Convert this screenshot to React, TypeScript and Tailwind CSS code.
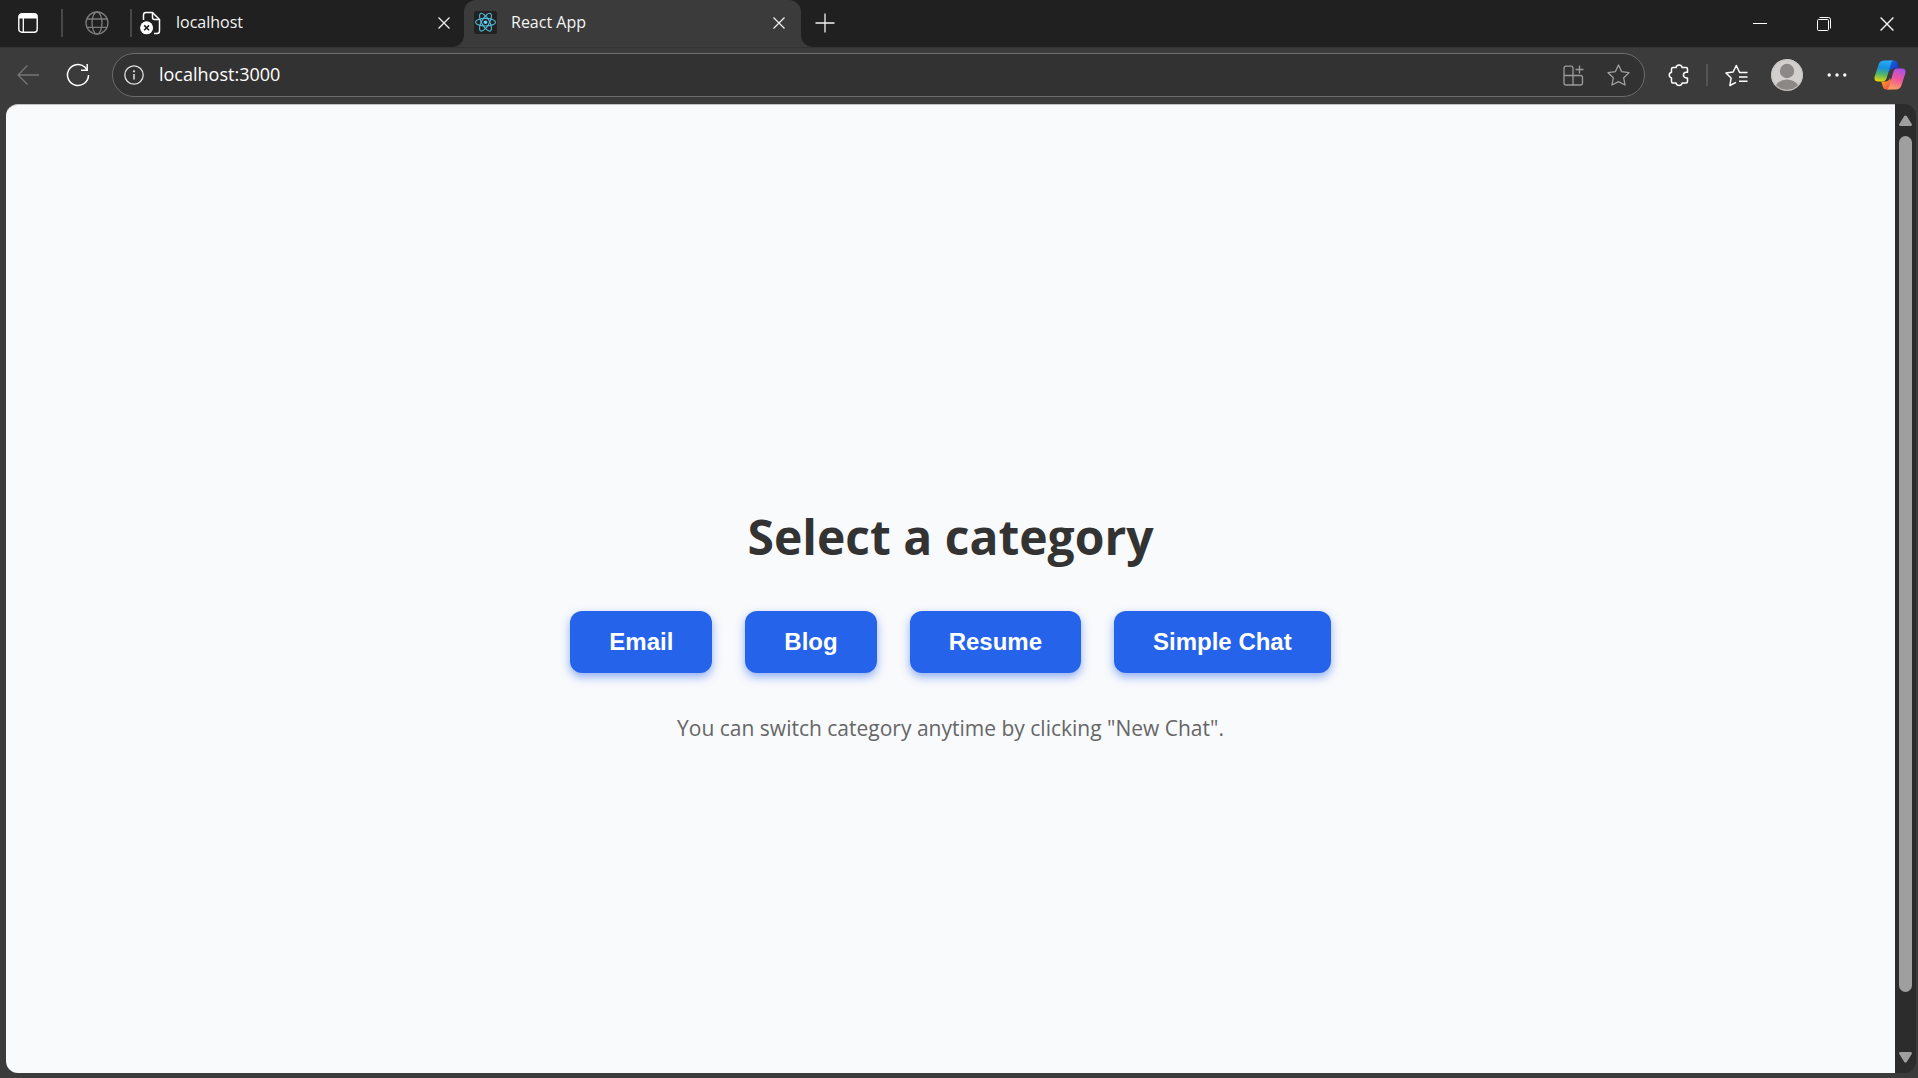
import React from "react";

const categories = ["Email", "Blog", "Resume", "Simple Chat"];

function TabActionsIcon() {
  return (
    <svg width="20" height="20" viewBox="0 0 20 20" fill="none" aria-hidden="true">
      <rect x="0.8" y="0.8" width="18.4" height="18.4" rx="3" stroke="#fff" strokeWidth="1.4" />
      <path d="M1 5.500V4a3 3 0 0 1 3-3h12a3 3 0 0 1 3 3v1.500z" fill="#fff" />
      <path d="M5.300 5v14" stroke="#fff" strokeWidth="1.300" />
    </svg>
  );
}

function GlobeIcon() {
  return (
    <svg width="24" height="24" viewBox="0 0 24 24" fill="none" stroke="#7b7b7b" strokeWidth="1.3" aria-hidden="true">
      <circle cx="12" cy="12" r="11" />
      <ellipse cx="12" cy="12" rx="5" ry="11" />
      <path d="M2 8h20M2 16.300h20" />
    </svg>
  );
}

function BrokenPageIcon() {
  return (
    <svg width="21" height="24" viewBox="0 0 21 24" fill="none" aria-hidden="true">
      <path
        d="M3.500 9V4a2.500 2.500 0 0 1 2.500-2.500h6.500l7 7V20a2.500 2.500 0 0 1-2.500 2.500h-3"
        stroke="#fff"
        strokeWidth="1.500"
      />
      <path d="M12.500 1.500V6.500a2 2 0 0 0 2 2h5" stroke="#fff" strokeWidth="1.500" />
      <circle cx="6.600" cy="16.800" r="6.500" fill="#fff" />
      <path d="M4.200 14.400l4.800 4.800M9 14.400l-4.800 4.800" stroke="#202020" strokeWidth="1.600" />
    </svg>
  );
}

function CloseIcon({ size = 12 }: { size?: number }) {
  return (
    <svg width={size} height={size} viewBox="0 0 12 12" fill="none" stroke="#f2f2f2" strokeWidth="1.2" aria-hidden="true">
      <path d="M0.500 0.500l11 11M11.500 0.500l-11 11" />
    </svg>
  );
}

function ReactIcon() {
  return (
    <svg width="23" height="23" viewBox="0 0 23 23" fill="none" stroke="#4fb9d6" strokeWidth="1.1" aria-hidden="true">
      <rect width="23" height="23" rx="2.500" fill="#222" stroke="none" />
      <ellipse cx="11.500" cy="11.200" rx="10" ry="3.800" />
      <ellipse cx="11.500" cy="11.200" rx="10" ry="3.800" transform="rotate(60 11.5 11.2)" />
      <ellipse cx="11.500" cy="11.200" rx="10" ry="3.800" transform="rotate(120 11.5 11.2)" />
      <circle cx="11.500" cy="11.200" r="1.800" fill="#61dafb" stroke="none" />
    </svg>
  );
}

function PlusIcon() {
  return (
    <svg width="20" height="20" viewBox="0 0 20 20" stroke="#f2f2f2" strokeWidth="1.300" aria-hidden="true">
      <path d="M10 0.500v19M0.500 10h19" />
    </svg>
  );
}

function MinimizeIcon() {
  return (
    <svg width="14" height="14" viewBox="0 0 14 14" stroke="#fff" aria-hidden="true">
      <path d="M0 6.500h14" />
    </svg>
  );
}

function RestoreIcon() {
  return (
    <svg width="14" height="14" viewBox="0 0 14 14" fill="none" stroke="#fff" aria-hidden="true">
      <rect x="0.500" y="2.500" width="11" height="11" rx="1" />
      <path d="M2.500 0.500h9a2 2 0 0 1 2 2v9" />
    </svg>
  );
}

function BackIcon() {
  return (
    <svg width="22" height="20" viewBox="0 0 22 20" fill="none" stroke="#767676" strokeWidth="1.300" aria-hidden="true">
      <path d="M22 10H1M10.500 0.500L1 10l9.500 9.500" />
    </svg>
  );
}

function ReloadIcon() {
  return (
    <svg width="24" height="24" viewBox="0 0 24 24" fill="none" stroke="#fff" strokeWidth="1.500" aria-hidden="true">
      <path d="M22.500 12A10.500 10.500 0 1 1 18.800 4L21.200 7" />
      <path d="M21.200 1v6.200h-6.200" />
    </svg>
  );
}

function InfoIcon() {
  return (
    <svg width="20" height="20" viewBox="0 0 20 20" fill="none" stroke="#e0e0e0" strokeWidth="1.300" aria-hidden="true">
      <circle cx="10" cy="10" r="9.200" />
      <path d="M10 9v5.500" strokeWidth="1.500" />
      <circle cx="10" cy="6.300" r="1.100" fill="#e0e0e0" stroke="none" />
    </svg>
  );
}

function AppsIcon() {
  return (
    <svg width="21" height="21" viewBox="0 0 21 21" fill="none" stroke="#9b9b9b" strokeWidth="1.300" aria-hidden="true">
      <path d="M10 10.500V3.200a2 2 0 0 0-2-2H3a2 2 0 0 0-2 2V18a2 2 0 0 0 2 2h14.500a2 2 0 0 0 2-2v-5.500a2 2 0 0 0-2-2H1M10 10.500V20M16.500 0.500v8M12.500 4.500h8" />
    </svg>
  );
}

function StarIcon() {
  return (
    <svg width="23" height="22" viewBox="0 0 23 22" fill="none" stroke="#a0a0a0" strokeWidth="1.300" strokeLinejoin="round" aria-hidden="true">
      <path d="M11.500 1l3.200 6.700 7.300 1-5.300 5.100 1.300 7.200-6.500-3.400L5 21l1.300-7.200L1 8.700l7.300-1z" />
    </svg>
  );
}

function PuzzleIcon() {
  return (
    <svg width="21" height="24" viewBox="0 0 21 24" fill="none" stroke="#fff" strokeWidth="1.500" strokeLinejoin="round" aria-hidden="true">
      <path d="M5 4.500H8a3.200 3.200 0 0 1 6.200 0H18a1.500 1.500 0 0 1 1.500 1.500v3.300h-1.300a2.800 2.800 0 0 0 0 5.600h1.300V18.500a1.500 1.500 0 0 1-1.500 1.500h-3.800a3.200 3.200 0 0 1-6.200 0H5a1.500 1.500 0 0 1-1.500-1.500V15a3 3 0 0 1 0-5.800V6a1.500 1.500 0 0 1 1.500-1.500z" />
    </svg>
  );
}

function FavoritesIcon() {
  return (
    <svg width="23" height="23" viewBox="0 0 23 23" fill="none" stroke="#fff" strokeWidth="1.500" strokeLinejoin="round" aria-hidden="true">
      <path d="M22.500 8.500H14.600L11.300 1.500 8.100 8 1 9l5.100 5-1.200 7.500 6-3.200" />
      <path d="M14 13h8.500M14 17.300h8.500" />
    </svg>
  );
}

function AvatarIcon() {
  return (
    <svg width="32" height="32" viewBox="0 0 32 32" aria-hidden="true">
      <defs>
        <clipPath id="avatar-clip">
          <circle cx="16" cy="16" r="16" />
        </clipPath>
      </defs>
      <g clipPath="url(#avatar-clip)">
        <rect width="32" height="32" fill="#d2d0ce" />
        <circle cx="16" cy="12" r="7.200" fill="#8c8885" />
        <ellipse cx="16" cy="30" rx="12" ry="9.500" fill="#8c8885" />
      </g>
      <circle cx="16" cy="16" r="15.400" fill="none" stroke="#c4c2bf" strokeWidth="1" />
    </svg>
  );
}

function MoreIcon() {
  return (
    <svg width="20" height="4" viewBox="0 0 20 4" fill="#fff" aria-hidden="true">
      <circle cx="2.200" cy="2" r="1.700" />
      <circle cx="10" cy="2" r="1.700" />
      <circle cx="17.800" cy="2" r="1.700" />
    </svg>
  );
}

function CopilotIcon() {
  return (
    <svg width="32" height="30" viewBox="0 0 32 30" aria-hidden="true">
      <defs>
        <linearGradient id="cp-left" x1="10" y1="0" x2="7" y2="22" gradientUnits="userSpaceOnUse">
          <stop offset="0" stopColor="#2aaefa" />
          <stop offset="0.350" stopColor="#1790dd" />
          <stop offset="0.650" stopColor="#4fb56a" />
          <stop offset="1" stopColor="#f5d800" />
        </linearGradient>
        <linearGradient id="cp-right" x1="26" y1="8" x2="19" y2="30" gradientUnits="userSpaceOnUse">
          <stop offset="0" stopColor="#a850e8" />
          <stop offset="0.500" stopColor="#f0569b" />
          <stop offset="1" stopColor="#ffa45c" />
        </linearGradient>
        <linearGradient id="cp-top" x1="15" y1="0" x2="24" y2="8" gradientUnits="userSpaceOnUse">
          <stop offset="0" stopColor="#1673dd" />
          <stop offset="1" stopColor="#1836c8" />
        </linearGradient>
        <linearGradient id="cp-bottom" x1="8" y1="21" x2="16" y2="29" gradientUnits="userSpaceOnUse">
          <stop offset="0" stopColor="#f7a020" />
          <stop offset="1" stopColor="#f04a4a" />
        </linearGradient>
      </defs>
      <path d="M15 0.500h5.500c1.800 0 2.600 1.200 3.100 2.800L25 8.500h-5c-2.500 0-4 1.300-4.600 3.500L13 5z" fill="url(#cp-top)" />
      <path d="M17 29.500h-5c-1.800 0-2.600-1.200-3.100-2.800L7.300 21.500h4c2.500 0 3.900-1.300 4.500-3.500L19 25z" fill="url(#cp-bottom)" />
      <path d="M10.500 0.500H20c-1.500 0-2.400 1-2.900 2.600l-4.400 15c-.7 2.300-2 3.400-4.200 3.400H4.300C1 21.500-.2 19.500.8 16.200L4.500 4.800C5.500 1.800 7.400.5 10.500.5z" fill="url(#cp-left)" />
      <path d="M21.500 29.500H12c1.500 0 2.400-1 2.900-2.600l4.400-15c.7-2.300 2-3.400 4.200-3.400h4.200c3.300 0 4.500 2 3.500 5.300l-3.700 11.400c-1 3-2.900 4.300-6 4.300z" fill="url(#cp-right)" />
    </svg>
  );
}

function Triangle({ down = false }: { down?: boolean }) {
  return (
    <svg width="13" height="11" viewBox="0 0 13 11" fill="#9f9f9f" aria-hidden="true" className={down ? "rotate-180" : ""}>
      <path d="M5.300 1.100a1.400 1.400 0 0 1 2.400 0l5 7.900a1.200 1.200 0 0 1-1 1.900H1.300a1.200 1.200 0 0 1-1-1.900z" />
    </svg>
  );
}

function TabStrip() {
  return (
    <div className="flex h-[47px] shrink-0 bg-[#3b3b3b] text-base text-[#f4f4f4]">
      <div className="flex w-[464px] items-center rounded-br-xl bg-[#202020] pb-0.5">
        <button aria-label="Tab actions" className="ml-[18px]">
          <TabActionsIcon />
        </button>
        <span className="ml-[23px] h-7 w-0.5 bg-[#484848]" />
        <button aria-label="Pinned tab" className="ml-[22px]">
          <GlobeIcon />
        </button>
        <span className="ml-[21px] h-7 w-0.5 bg-[#484848]" />
        <div className="ml-2 flex flex-1 items-center">
          <BrokenPageIcon />
          <button className="ml-[15px] flex-1 pb-0.5 text-left">localhost</button>
          <button aria-label="Close localhost" className="mr-3.5">
            <CloseIcon />
          </button>
        </div>
      </div>
      <div className="w-[337px] bg-[#202020]">
        <div className="flex h-full items-center rounded-t-xl bg-[#3b3b3b] pr-4 pb-0.5 pl-2.5">
          <ReactIcon />
          <button className="ml-3.5 flex-1 pb-0.5 text-left">React App</button>
          <button aria-label="Close React App">
            <CloseIcon />
          </button>
        </div>
      </div>
      <div className="flex flex-1 items-center rounded-bl-xl bg-[#202020]">
        <button aria-label="New tab" className="ml-3.5 pb-0.5">
          <PlusIcon />
        </button>
        <div className="ml-auto flex">
          <button aria-label="Minimize" className="flex w-16 justify-center">
            <MinimizeIcon />
          </button>
          <button aria-label="Restore" className="flex w-16 justify-center">
            <RestoreIcon />
          </button>
          <button aria-label="Close window" className="flex w-[62px] justify-center">
            <CloseIcon size={14} />
          </button>
        </div>
      </div>
    </div>
  );
}

function Toolbar() {
  return (
    <div className="flex h-[57px] shrink-0 items-center border-t border-[#343434] bg-[#3b3b3b] pr-3 pb-0.5 pl-[17px]">
      <button aria-label="Back">
        <BackIcon />
      </button>
      <button aria-label="Reload" className="ml-[27px]">
        <ReloadIcon />
      </button>
      <div className="ml-[22px] flex h-11 flex-1 items-center rounded-full border border-[#6c6c6c] bg-[#323232] pr-3.5 pl-[11px]">
        <button aria-label="Site information">
          <InfoIcon />
        </button>
        <input
          aria-label="Address"
          defaultValue="localhost:3000"
          className="ml-[15px] min-w-0 flex-1 bg-transparent pb-0.5 text-lg text-white outline-none"
        />
        <button aria-label="Apps">
          <AppsIcon />
        </button>
        <button aria-label="Add to favorites" className="ml-[23px]">
          <StarIcon />
        </button>
      </div>
      <button aria-label="Extensions" className="ml-[23px]">
        <PuzzleIcon />
      </button>
      <span className="ml-[17px] h-[22px] w-0.5 bg-[#555]" />
      <button aria-label="Favorites" className="ml-[17px]">
        <FavoritesIcon />
      </button>
      <button aria-label="Profile" className="ml-[23px]">
        <AvatarIcon />
      </button>
      <button aria-label="Settings and more" className="ml-6">
        <MoreIcon />
      </button>
      <button aria-label="Copilot" className="ml-[27px]">
        <CopilotIcon />
      </button>
    </div>
  );
}

function CategoryPage() {
  return (
    <main className="flex flex-1 flex-col items-center justify-center rounded-l-xl border-t border-[#c4c4c4] bg-[#f9fafc] pt-[68px]">
      <h1 className="text-5xl leading-[68px] font-bold text-[#333]">Select a category</h1>
      <div className="mt-10 flex gap-[33px]">
        {categories.map((name) => (
          <button
            key={name}
            className="h-[62px] rounded-xl bg-[#2563eb] px-[39px] font-['Liberation_Sans',Arial,sans-serif] text-2xl font-bold text-white shadow-[0_4px_10px_rgba(37,99,235,0.5)]"
          >
            {name}
          </button>
        ))}
      </div>
      <p className="mt-10 text-[21px] leading-[30px] text-[#666]">
        You can switch category anytime by clicking "New Chat".
      </p>
    </main>
  );
}

export default function App() {
  return (
    <div className="flex h-screen flex-col overflow-hidden bg-[#3b3b3b] font-['Open_Sans','Noto_Sans',sans-serif]">
      <TabStrip />
      <Toolbar />
      <div className="flex min-h-0 flex-1 pr-0.5 pb-[5px] pl-1.5">
        <CategoryPage />
        <div className="flex w-[21px] flex-col items-center rounded-r-xl bg-[#2c2c2c] pt-[11px] pb-2.5">
          <Triangle />
          <div className="mt-2.5 mb-[60px] w-[13px] flex-1 rounded-full bg-[#9f9f9f]" />
          <Triangle down />
        </div>
      </div>
    </div>
  );
}
